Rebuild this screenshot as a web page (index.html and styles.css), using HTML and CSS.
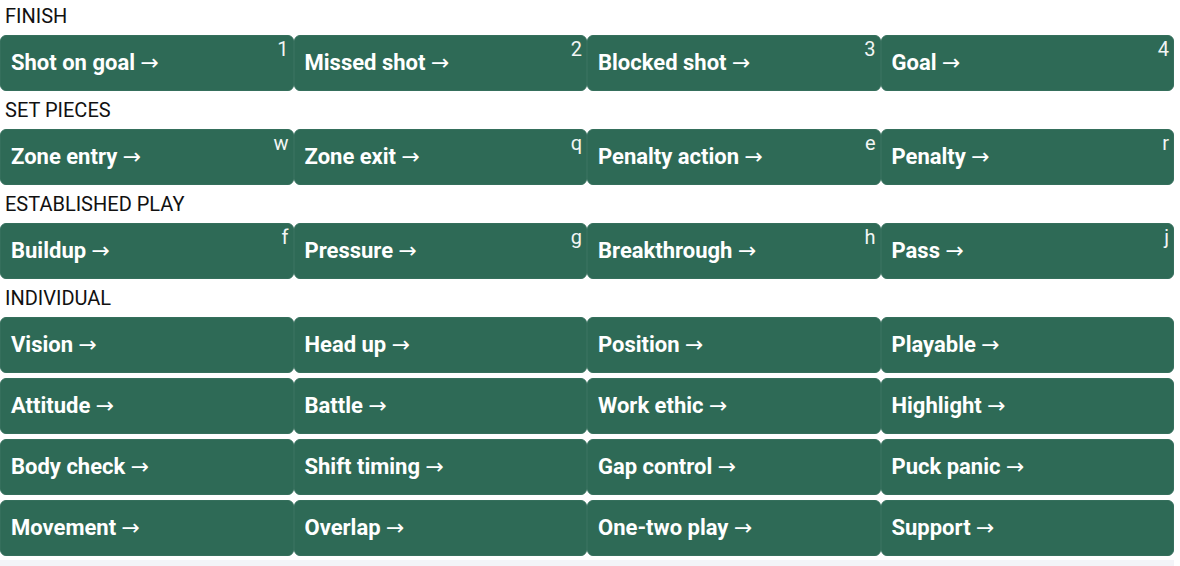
FILE: index.html
```html
<!DOCTYPE html>
<html lang="en">
<head>
    <meta charset="UTF-8">
    <meta name="viewport" content="width=device-width, initial-scale=1.0">
    <title>Event tagging</title>
    <link rel="stylesheet" href="styles.css">
</head>
<body>

    <div class="panel">
        <div class="section">
            <div class="section-title">FINISH</div>
            <div class="grid">
                <button class="tag">Shot on goal <span class="arrow">→</span><span class="key">1</span></button>
                <button class="tag">Missed shot <span class="arrow">→</span><span class="key">2</span></button>
                <button class="tag">Blocked shot <span class="arrow">→</span><span class="key">3</span></button>
                <button class="tag">Goal <span class="arrow">→</span><span class="key">4</span></button>
            </div>
        </div>

        <div class="section">
            <div class="section-title">SET PIECES</div>
            <div class="grid">
                <button class="tag">Zone entry <span class="arrow">→</span><span class="key">w</span></button>
                <button class="tag">Zone exit <span class="arrow">→</span><span class="key">q</span></button>
                <button class="tag">Penalty action <span class="arrow">→</span><span class="key">e</span></button>
                <button class="tag">Penalty <span class="arrow">→</span><span class="key">r</span></button>
            </div>
        </div>

        <div class="section">
            <div class="section-title">ESTABLISHED PLAY</div>
            <div class="grid">
                <button class="tag">Buildup <span class="arrow">→</span><span class="key">f</span></button>
                <button class="tag">Pressure <span class="arrow">→</span><span class="key">g</span></button>
                <button class="tag">Breakthrough <span class="arrow">→</span><span class="key">h</span></button>
                <button class="tag">Pass <span class="arrow">→</span><span class="key">j</span></button>
            </div>
        </div>

        <div class="section">
            <div class="section-title">INDIVIDUAL</div>
            <div class="grid">
                <button class="tag">Vision <span class="arrow">→</span></button>
                <button class="tag">Head up <span class="arrow">→</span></button>
                <button class="tag">Position <span class="arrow">→</span></button>
                <button class="tag">Playable <span class="arrow">→</span></button>
                <button class="tag">Attitude <span class="arrow">→</span></button>
                <button class="tag">Battle <span class="arrow">→</span></button>
                <button class="tag">Work ethic <span class="arrow">→</span></button>
                <button class="tag">Highlight <span class="arrow">→</span></button>
                <button class="tag">Body check <span class="arrow">→</span></button>
                <button class="tag">Shift timing <span class="arrow">→</span></button>
                <button class="tag">Gap control <span class="arrow">→</span></button>
                <button class="tag">Puck panic <span class="arrow">→</span></button>
                <button class="tag">Movement <span class="arrow">→</span></button>
                <button class="tag">Overlap <span class="arrow">→</span></button>
                <button class="tag">One-two play <span class="arrow">→</span></button>
                <button class="tag">Support <span class="arrow">→</span></button>
            </div>
        </div>

        <div class="footer"></div>
    </div>

</body>
</html>
```

FILE: styles.css
```css
body {
    margin: 0;
    padding: 0;
    background: #fff;
    font-family: Roboto, "Liberation Sans", Arial, sans-serif;
    color: #111;
}

.panel {
    width: 1174px;
}

.section + .section {
    margin-top: 3px;
}

.section-title {
    font-size: 20px;
    line-height: 23px;
    padding: 5px 5px 7px;
}

.grid {
    display: grid;
    grid-template-columns: repeat(4, 1fr);
    row-gap: 5px;
}

.tag {
    position: relative;
    display: flex;
    align-items: center;
    height: 56px;
    margin: 0;
    padding: 0 10px 1px;
    background: #2e6a56;
    border: 1px solid #356f5c;
    border-radius: 6px;
    color: #fff;
    font-family: inherit;
    font-size: 22px;
    font-weight: bold;
    text-align: left;
    white-space: pre;
    cursor: pointer;
}

.tag:hover {
    background: #347361;
}

.arrow {
    font-family: "DejaVu Sans", sans-serif;
    font-weight: normal;
    font-size: 22px;
}

.key {
    position: absolute;
    top: 2px;
    right: 4px;
    font-size: 20px;
    line-height: 23px;
    font-weight: normal;
    color: #f2f5f4;
}

.footer {
    margin-top: 4px;
    height: 6px;
    background: #f3f4f8;
}
```
